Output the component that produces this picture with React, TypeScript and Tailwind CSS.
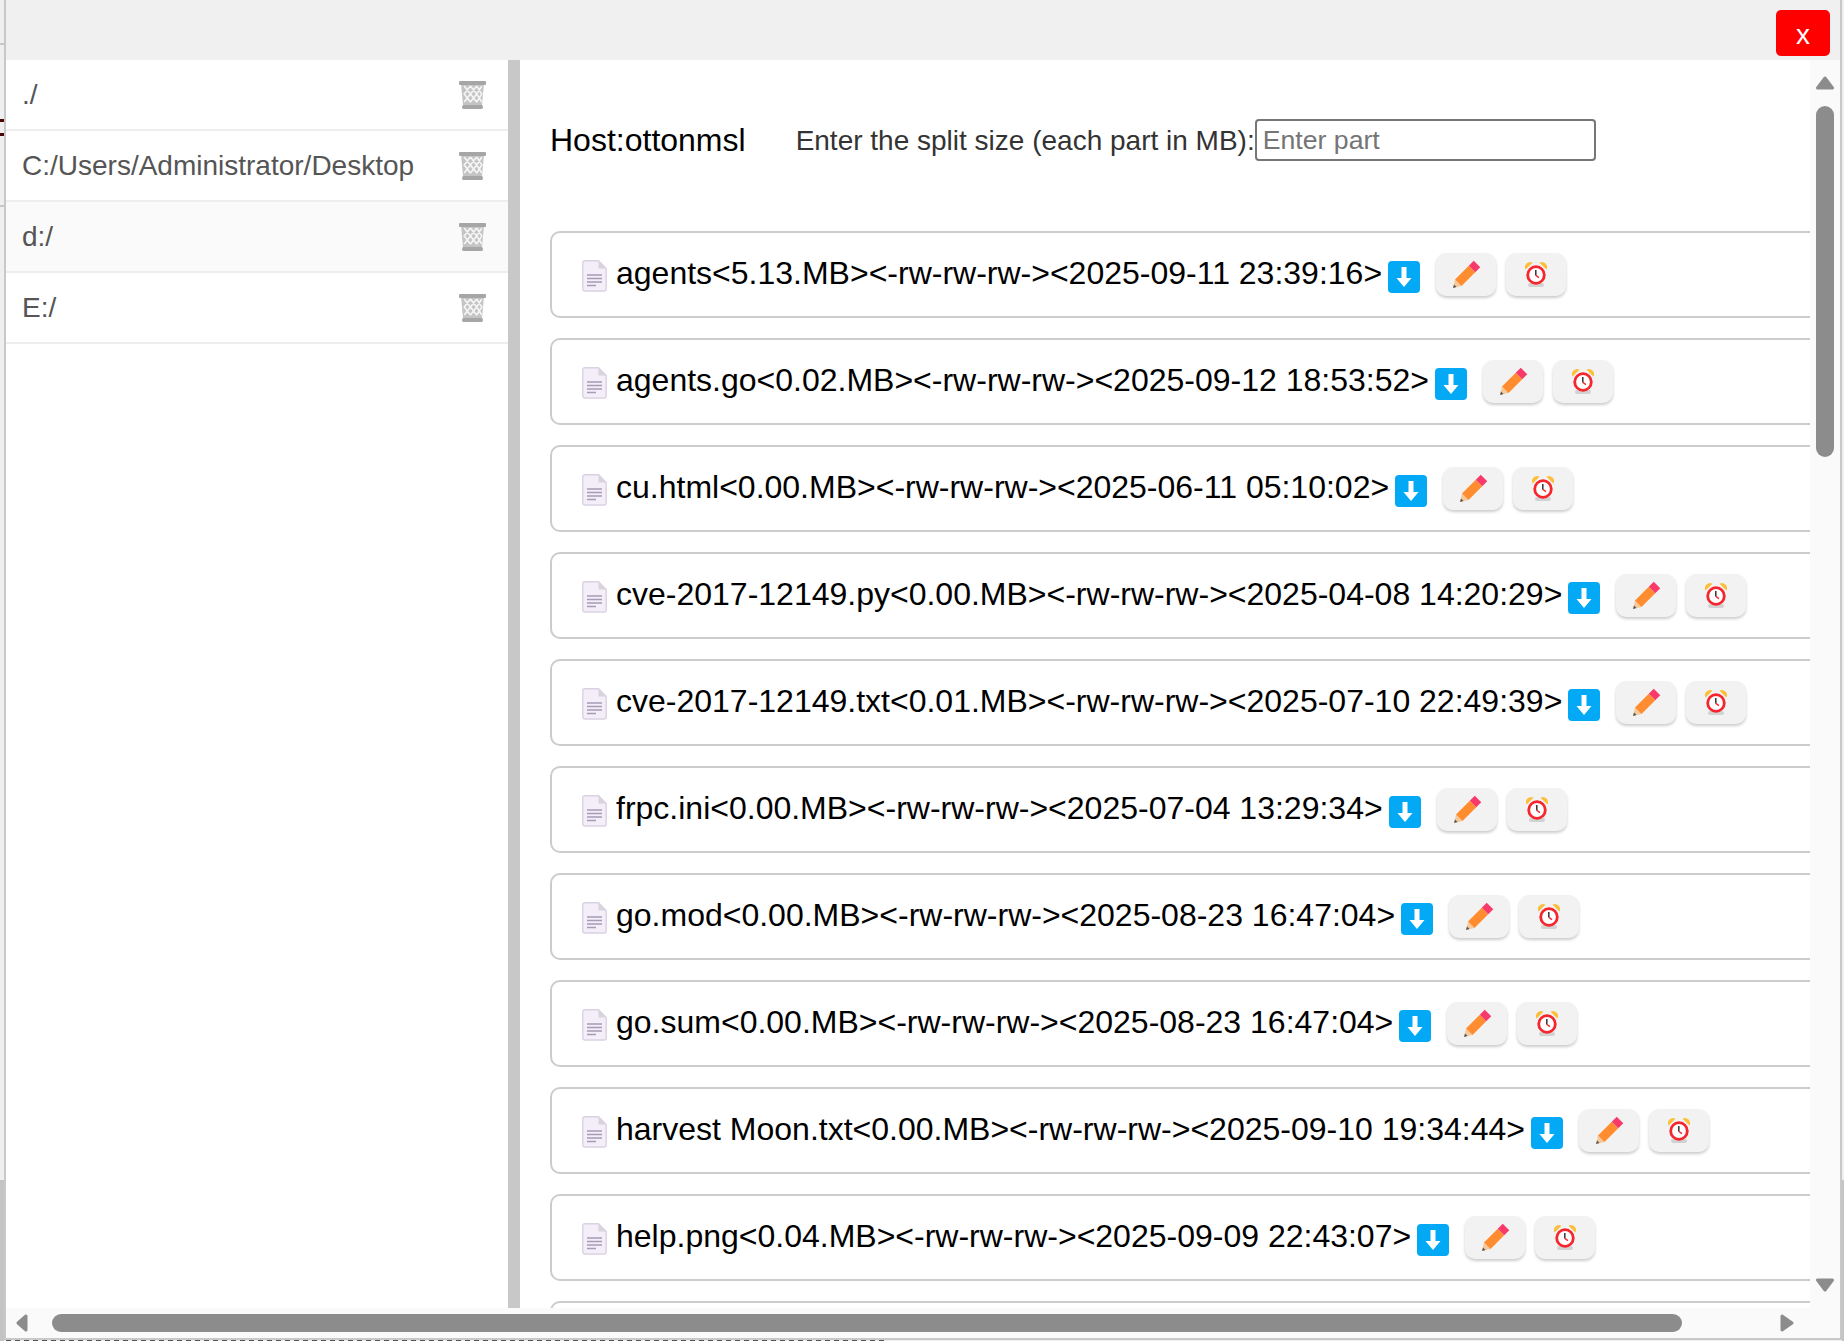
const FILES = [
  'agents<5.13.MB><-rw-rw-rw-><2025-09-11 23:39:16>',
  'agents.go<0.02.MB><-rw-rw-rw-><2025-09-12 18:53:52>',
  'cu.html<0.00.MB><-rw-rw-rw-><2025-06-11 05:10:02>',
  'cve-2017-12149.py<0.00.MB><-rw-rw-rw-><2025-04-08 14:20:29>',
  'cve-2017-12149.txt<0.01.MB><-rw-rw-rw-><2025-07-10 22:49:39>',
  'frpc.ini<0.00.MB><-rw-rw-rw-><2025-07-04 13:29:34>',
  'go.mod<0.00.MB><-rw-rw-rw-><2025-08-23 16:47:04>',
  'go.sum<0.00.MB><-rw-rw-rw-><2025-08-23 16:47:04>',
  'harvest Moon.txt<0.00.MB><-rw-rw-rw-><2025-09-10 19:34:44>',
  'help.png<0.04.MB><-rw-rw-rw-><2025-09-09 22:43:07>',
]

const DIRS = ['./', 'C:/Users/Administrator/Desktop', 'd:/', 'E:/']

function TrashIcon() {
  return (
    <svg width="27" height="28" viewBox="0 0 26 28" className="shrink-0" preserveAspectRatio="none">
      <polygon points="2,3 24,3 22,26 4,26" fill="#c4c4c4" />
      <g stroke="#f4f4f4" strokeWidth="1.6">
        <path d="M5 5 L11 13 L5 21 M11 5 L5 13 L11 21 M11 5 L17 13 L11 21 M17 5 L11 13 L17 21 M17 5 L22 13 L17 21 M22 5 L17 13 L22 21" fill="none" />
      </g>
      <rect x="0" y="0" width="26" height="4" rx="1" fill="#a6a6a6" />
      <rect x="3" y="24" width="20" height="4" rx="1.5" fill="#a6a6a6" />
    </svg>
  )
}

function DocIcon() {
  return (
    <svg width="25" height="32" viewBox="0 0 25 32" className="shrink-0 mt-[2px]">
      <path d="M2.5 .8 H16.5 L24.2 8.5 V29 a2 2 0 0 1 -2 2 H2.8 a2 2 0 0 1 -2 -2 V2.5 a1.7 1.7 0 0 1 1.7 -1.7 Z" fill="#f3eef8" stroke="#dad2e3" strokeWidth="1.4" />
      <path d="M16.5 .8 V8.5 H24.2 Z" fill="#d8d3dc" />
      <path d="M5 15 H20 M5 18.5 H20 M5 22 H20 M5 25.5 H14" stroke="#a79bb5" strokeWidth="1.4" />
    </svg>
  )
}

function DownIcon() {
  return (
    <div className="w-[32px] h-[32px] rounded-[4px] bg-[#03a9f4] shrink-0 mt-[4px] ml-[6px] flex items-center justify-center">
      <svg width="32" height="32" viewBox="0 0 32 32">
        <polygon points="13.5,6 18.5,6 18.5,17 23.5,17 16,26 8.5,17 13.5,17" fill="#fff" />
      </svg>
    </div>
  )
}

function PencilIcon() {
  return (
    <svg width="30" height="30" viewBox="0 0 30 30">
      <polygon points="4,19.5 10.5,26 2,28" fill="#f5c99a" />
      <polygon points="2,28 3,24.5 5.5,27" fill="#555" />
      <polygon points="4,19.5 17.75,5.75 24.25,12.25 10.5,26" fill="#ff8c2e" />
      <polygon points="17.75,5.75 22.75,.75 29.25,7.25 24.25,12.25" fill="#f83a6a" />
    </svg>
  )
}

function ClockIcon() {
  return (
    <svg width="22" height="25" viewBox="0 0 22 25">
      <rect x="3" y="21" width="16" height="4" rx="2" fill="#d2d2d2" />
      <path d="M.6 7.5 A5 5 0 0 1 7.5 .8 Z" fill="#fbbf3b" />
      <path d="M21.4 7.5 A5 5 0 0 0 14.5 .8 Z" fill="#fbbf3b" />
      <circle cx="11" cy="13" r="8.3" fill="#fff" stroke="#f5262d" strokeWidth="2.8" />
      <path d="M10.8 8 V13.4" stroke="#333" strokeWidth="1.5" fill="none" />
      <path d="M10.8 13.4 L14 15.6" stroke="#f5262d" strokeWidth="1.3" fill="none" />
    </svg>
  )
}

function FileRow({ name }: { name: string }) {
  return (
    <div className="w-[1500px] h-[87px] mb-[20px] shrink-0 border-2 border-[#cccccc] rounded-[10px] flex items-center pl-[30px]">
      <DocIcon />
      <span className="ml-[9px] -mt-[3px] text-[32px] text-black whitespace-nowrap">{name}</span>
      <DownIcon />
      <button className="ml-[16px] w-[60px] h-[43px] rounded-[10px] bg-[#f2f2f2] shadow-[0_2px_3px_rgba(0,0,0,0.2)] flex items-center justify-center">
        <PencilIcon />
      </button>
      <button className="ml-[10px] w-[60px] h-[43px] rounded-[10px] bg-[#f2f2f2] shadow-[0_2px_3px_rgba(0,0,0,0.2)] flex items-center justify-center">
        <ClockIcon />
      </button>
    </div>
  )
}

export default function App() {
  return (
    <div className="relative w-[1844px] h-[1341px] overflow-hidden bg-[#efefef] font-['Liberation_Sans',Arial,sans-serif]">
      {/* page underneath the dialog */}
      <div className="absolute left-0 top-[43px] w-[4px] h-[2px] bg-[#c8c8c8]" />
      <div className="absolute left-0 top-[119px] w-[4px] h-[3px] bg-[#4a0505]" />
      <div className="absolute left-0 top-[133px] w-[4px] h-[3px] bg-[#4a0505]" />
      <div className="absolute left-0 top-[205px] w-[4px] h-[2px] bg-[#c8c8c8]" />
      <div className="absolute left-0 top-[1180px] w-[4px] h-[161px] bg-[#c4c4c4]" />
      <div className="absolute right-0 top-[1180px] w-[2px] h-[161px] bg-[#c4c4c4]" />
      <div className="absolute left-[6px] bottom-0 w-[880px] h-[1px] bg-[repeating-linear-gradient(90deg,#555_0,#555_5px,transparent_5px,transparent_9px)]" />

      <div className="absolute left-[4px] top-0 w-[1838px] h-[1340px] border-x-2 border-b-2 border-[#c8c8c8] bg-white flex flex-col">
        <div className="h-[60px] shrink-0 bg-[#f0f0f0] flex justify-end items-start">
          <button className="mt-[10px] mr-[10px] w-[54px] h-[46px] rounded-[5px] bg-[#ff0000] text-white text-[28px] leading-[46px] pt-[2px]">
            x
          </button>
        </div>

        <div className="flex-1 min-h-0 flex">
          {/* paths */}
          <div className="w-[502px] shrink-0">
            {DIRS.map((d) => (
              <div
                key={d}
                className={`h-[71px] border-b-2 border-[#eeeeee] flex items-center justify-between pl-[16px] pr-[22px] text-[28px] text-[#555555] ${d === 'd:/' ? 'bg-[#fafafa]' : ''}`}
              >
                <span>{d}</span>
                <TrashIcon />
              </div>
            ))}
          </div>
          <div className="w-[12px] shrink-0 bg-[#c8c8c8]" />

          {/* files */}
          <div className="flex-1 min-w-0 overflow-hidden pl-[30px] pt-[59px]">
            <div className="flex items-center h-[42px] mb-[70px] whitespace-nowrap">
              <span className="text-[32px] text-black">Host:ottonmsl</span>
              <span className="ml-[50px] mt-[1px] text-[28px] text-[#333333]">Enter the split size (each part in MB):</span>
              <input
                placeholder="Enter part"
                className="w-[341px] h-[42px] border-2 border-[#767676] rounded-[4px] px-[6px] text-[26.67px] placeholder:text-[#757575] outline-none"
              />
            </div>
            {FILES.map((f) => (
              <FileRow key={f} name={f} />
            ))}
            <div className="w-[1500px] h-[87px] border-2 border-[#cccccc] rounded-[10px]" />
          </div>

          {/* vertical scrollbar */}
          <div className="w-[30px] shrink-0 bg-[#fafafa] flex flex-col items-center pt-[16px] pb-[16px]">
            <svg width="18" height="14" viewBox="0 0 18 14">
              <polygon points="9,2 16.5,12 1.5,12" fill="#8c8c8c" stroke="#8c8c8c" strokeWidth="3" strokeLinejoin="round" />
            </svg>
            <div className="mt-[16px] w-[18px] h-[351px] rounded-full bg-[#8c8c8c]" />
            <div className="flex-1" />
            <svg width="18" height="14" viewBox="0 0 18 14">
              <polygon points="1.5,2 16.5,2 9,12" fill="#8c8c8c" stroke="#8c8c8c" strokeWidth="3" strokeLinejoin="round" />
            </svg>
          </div>
        </div>

        {/* horizontal scrollbar */}
        <div className="h-[30px] shrink-0 bg-[#fafafa] flex items-center pl-[10px]">
          <svg width="12" height="18" viewBox="0 0 12 18">
            <polygon points="2,9 10,2 10,16" fill="#8c8c8c" stroke="#8c8c8c" strokeWidth="3" strokeLinejoin="round" />
          </svg>
          <div className="ml-[24px] w-[1630px] h-[18px] rounded-full bg-[#8c8c8c]" />
          <svg width="14" height="18" viewBox="0 0 14 18" className="ml-[98px]">
            <polygon points="2,2 12,9 2,16" fill="#8c8c8c" stroke="#8c8c8c" strokeWidth="3" strokeLinejoin="round" />
          </svg>
        </div>
      </div>
    </div>
  )
}
